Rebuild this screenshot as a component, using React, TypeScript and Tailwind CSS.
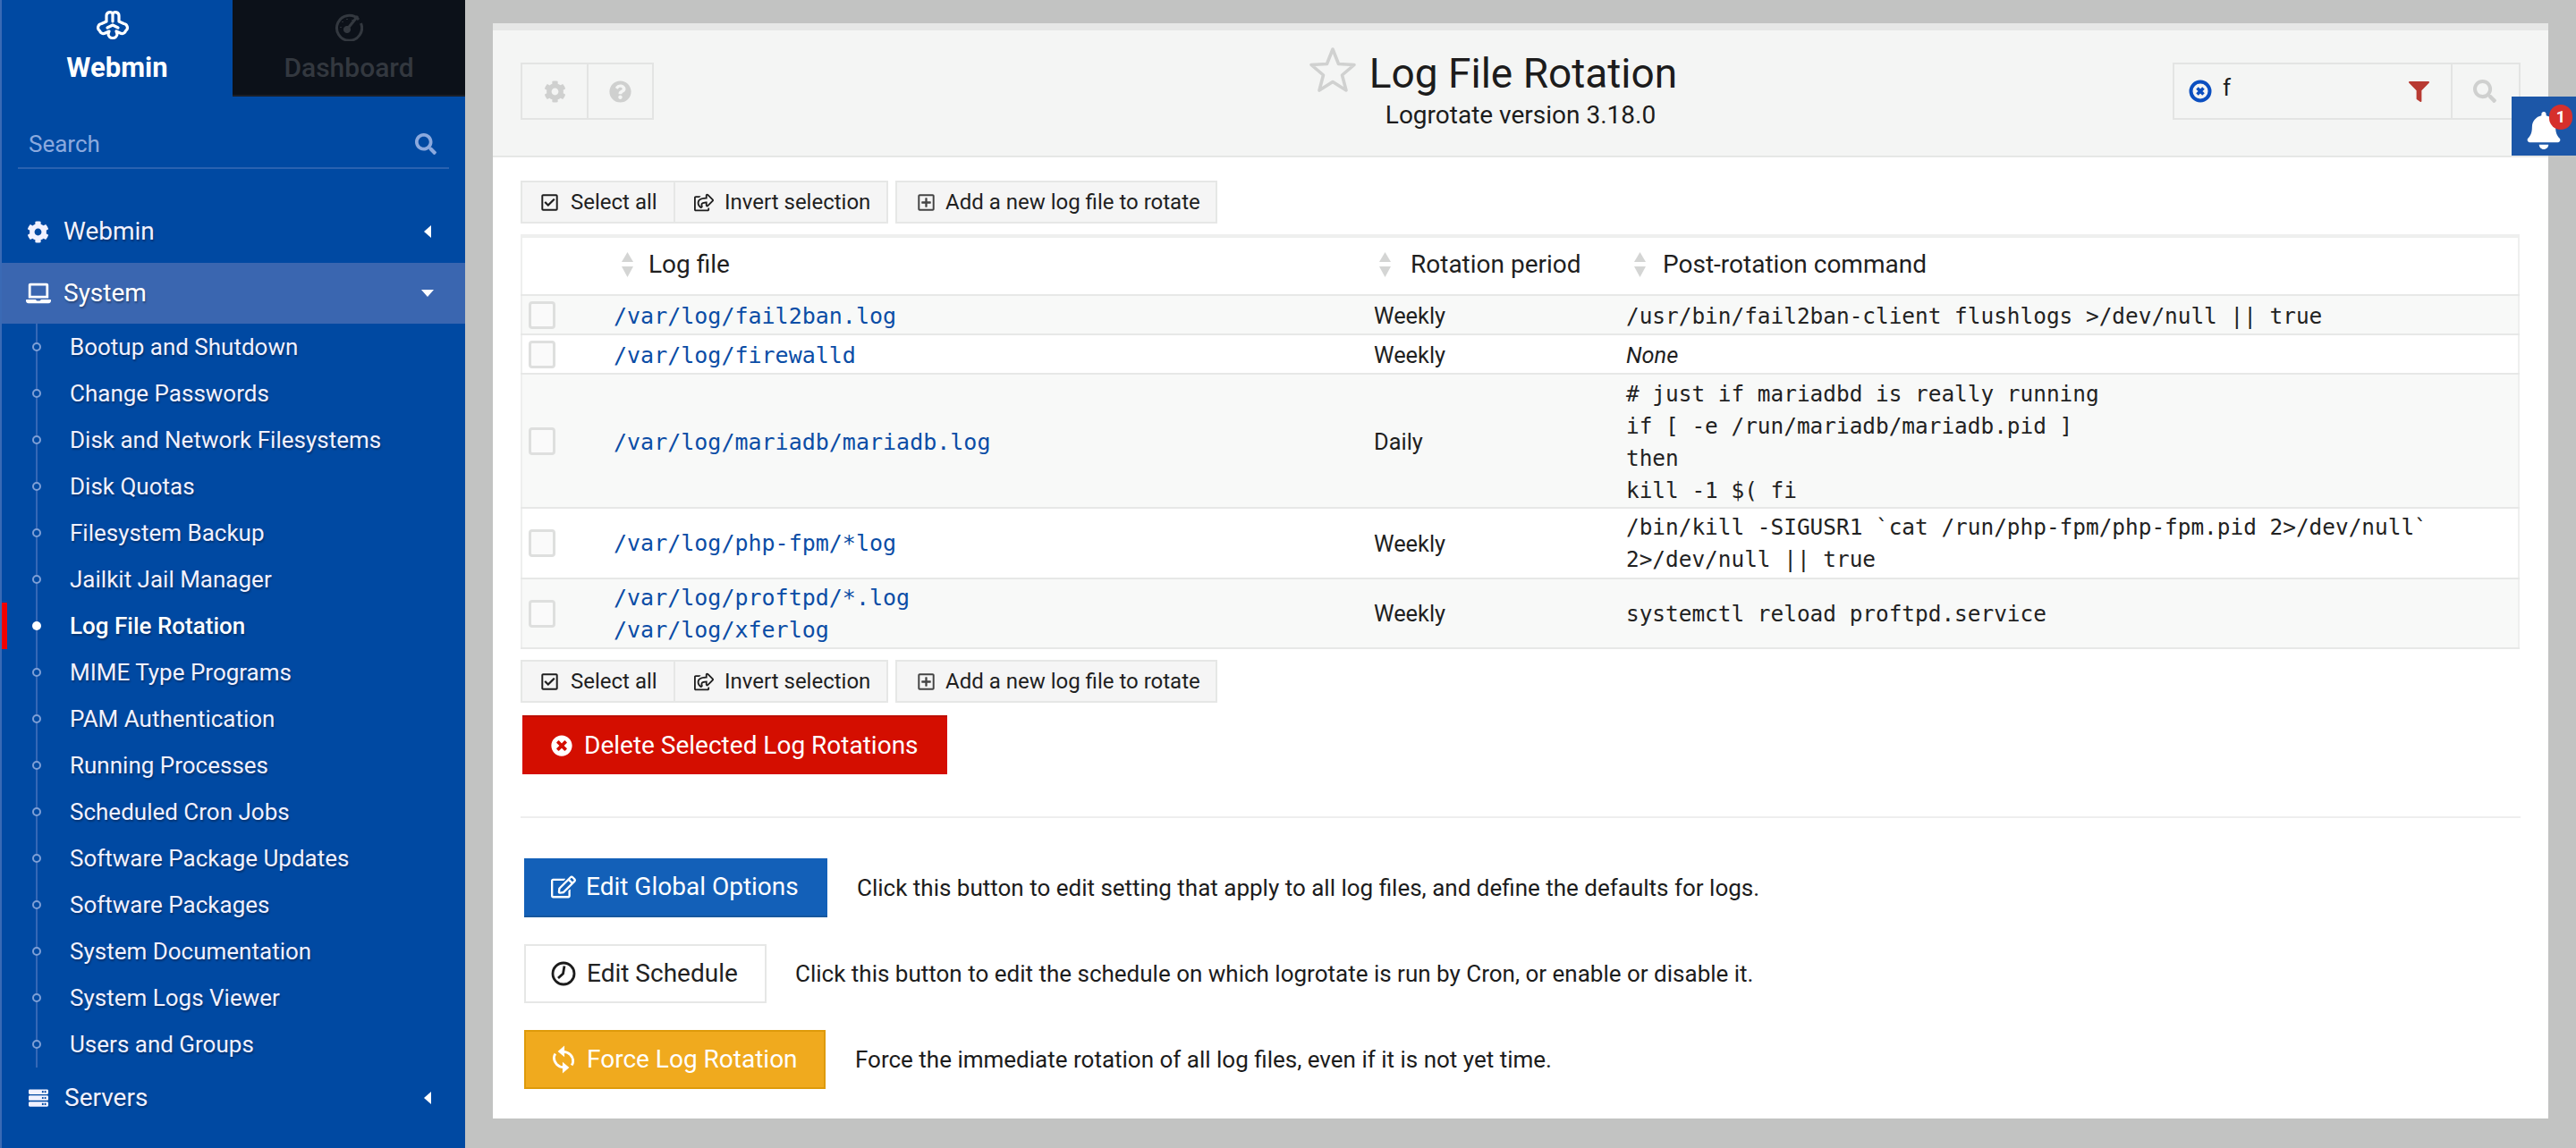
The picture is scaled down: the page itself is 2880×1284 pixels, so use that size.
import React from "react";
import {
  FaCog, FaLaptop, FaServer, FaSearch, FaQuestionCircle, FaRegCheckSquare, FaRegShareSquare,
  FaRegPlusSquare, FaTimesCircle, FaRegEdit, FaBell, FaFilter, FaTools,
} from "react-icons/fa";

const items = [
  "Bootup and Shutdown", "Change Passwords", "Disk and Network Filesystems", "Disk Quotas",
  "Filesystem Backup", "Jailkit Jail Manager", "Log File Rotation", "MIME Type Programs",
  "PAM Authentication", "Running Processes", "Scheduled Cron Jobs", "Software Package Updates",
  "Software Packages", "System Documentation", "System Logs Viewer", "Users and Groups",
];

const shadow = "[text-shadow:1px_2px_2px_rgba(0,0,0,0.3)]";

function Logo() {
  return (
    <svg width="36" height="34" viewBox="0 0 36 34" fill="none" stroke="white" strokeWidth="3.2" strokeLinejoin="round" strokeLinecap="round">
      <path d="M11 13V6.5A4 4 0 0 1 18 4A4 4 0 0 1 25 6.5V13L30.5 15.5A4.4 4.4 0 0 1 32.5 23.5A4.4 4.4 0 0 1 27.5 26.5L22 24L23 27A4.6 4.6 0 0 1 18 31.5A4.6 4.6 0 0 1 13 27L14 24L8.5 26.5A4.4 4.4 0 0 1 3.5 23.5A4.4 4.4 0 0 1 5.5 15.5Z" />
      <path d="M18 5V13M12 20L18 17L24 20" />
    </svg>
  );
}

function Gauge() {
  return (
    <svg width="32" height="32" viewBox="0 0 32 32" fill="none" stroke="#33383f">
      <path d="M27 8A14 14 0 1 0 29.5 12" strokeWidth="3" />
      <path d="M13 20L26 4" strokeWidth="3" />
      <circle cx="14" cy="19" r="3.6" fill="#33383f" />
      <path d="M7 16v1M9 10v1M14 7v1M20 8v1" strokeWidth="1.5" />
    </svg>
  );
}

function ClockIcon() {
  return (
    <svg width="28" height="28" viewBox="0 0 28 28" fill="none" stroke="#1c1c1c" strokeWidth="2.8">
      <circle cx="14" cy="14" r="12" />
      <path d="M15 5.5L13.5 14L8 19" />
    </svg>
  );
}

function RefreshIcon() {
  return (
    <svg width="30" height="32" viewBox="0 0 28 30" fill="none" stroke="white" strokeWidth="2.6">
      <path d="M14 7A10 10 0 0 1 24 17Q24 19 22.5 21" />
      <path d="M15 0.5L8 6.5L15 12.5Z" fill="white" stroke="none" />
      <path d="M14 23A10 10 0 0 1 4 13Q4 11 5.5 9" />
      <path d="M13 17.5L20 23.5L13 29.5Z" fill="white" stroke="none" />
    </svg>
  );
}

function Sort() {
  return (
    <svg width="15" height="28" viewBox="0 0 15 28" fill="#d4d5d4">
      <path d="M7.5 0L14 11H1Z" />
      <path d="M1 16H14L7.5 28Z" />
    </svg>
  );
}

function Toolbar() {
  const base = "flex items-center h-full text-[24px] text-[#1f1f1f]";
  return (
    <div className="flex gap-[8px] h-[48px]">
      <div className="flex h-full border-2 border-[#e6e7e6] bg-[#f5f5f5] w-[411px]">
        <div className={`${base} gap-[14px] w-[171px] border-r-2 border-[#e6e7e6] pl-[21px]`}>
          <FaRegCheckSquare className="w-[19px] h-[21px] shrink-0" />
          <span>Select all</span>
        </div>
        <div className={`${base} gap-[12px] flex-1 pl-[21px]`}>
          <FaRegShareSquare className="w-[22px] h-[21px] shrink-0" />
          <span>Invert selection</span>
        </div>
      </div>
      <div className={`${base} border-2 border-[#e6e7e6] bg-[#f5f5f5] w-[360px] pl-[23px] gap-[12px]`}>
        <FaRegPlusSquare className="w-[19px] h-[21px] shrink-0 text-[#444]" />
        <span>Add a new log file to rotate</span>
      </div>
    </div>
  );
}

function Check() {
  return <span className="block ml-[7px] w-[30px] h-[31px] rounded-[4px] border-[3px] border-[#dedfde] bg-[#fafafa]" />;
}

const mono = "font-['DejaVu_Sans_Mono',monospace] text-[24.4px] leading-[36px] text-[#222]";
const link = "font-['DejaVu_Sans_Mono',monospace] text-[25px] leading-[36px] text-[#0b4da6]";

const rows: { h: string; bg: string; pad: string; log: string[]; period: string; cmd: string[]; italic?: boolean }[] = [
  { h: "h-[44px]", bg: "bg-[#f8f9f8]", pad: "pt-[3px]", log: ["/var/log/fail2ban.log"], period: "Weekly", cmd: ["/usr/bin/fail2ban-client flushlogs >/dev/null || true"] },
  { h: "h-[44px]", bg: "bg-white", pad: "pt-[3px]", log: ["/var/log/firewalld"], period: "Weekly", cmd: ["None"], italic: true },
  { h: "h-[150px]", bg: "bg-[#f8f9f8]", pad: "pt-[3px]", log: ["/var/log/mariadb/mariadb.log"], period: "Daily", cmd: ["# just if mariadbd is really running", "if [ -e /run/mariadb/mariadb.pid ]", "then", "kill -1 $( fi"] },
  { h: "h-[79px]", bg: "bg-white", pad: "pt-[1px]", log: ["/var/log/php-fpm/*log"], period: "Weekly", cmd: ["/bin/kill -SIGUSR1 `cat /run/php-fpm/php-fpm.pid 2>/dev/null`", "2>/dev/null || true"] },
  { h: "h-[78px]", bg: "bg-[#f8f9f8]", pad: "pt-[1px]", log: ["/var/log/proftpd/*.log", "/var/log/xferlog"], period: "Weekly", cmd: ["systemctl reload proftpd.service"] },
];

function Sidebar() {
  const row = "flex items-center h-[68px] text-[28px] text-[#f1f1ff] " + shadow;
  return (
    <aside className="w-[520px] shrink-0 h-full bg-[#0049a2] border-l-2 border-[#3a6ab5] overflow-hidden">
      <div className="flex h-[108px]">
        <div className="w-[258px] flex flex-col items-center pt-[11px]">
          <div className="-ml-[10px]"><Logo /></div>
          <div className="text-[31px] leading-[36px] font-bold text-white mt-[13px]">Webmin</div>
        </div>
        <div className="w-[260px] bg-[#0c1119] border-b-2 border-[#1b1f27] flex flex-col items-center pt-[14px]">
          <Gauge />
          <div className="text-[30px] leading-[36px] font-medium text-[#33383f] mt-[12px]">Dashboard</div>
        </div>
      </div>
      <div className="mx-[18px] mt-[33px] h-[48px] border-b-2 border-[#2a62b0] flex items-center justify-between pl-[12px] pr-[14px] pb-[6px] text-[26px] text-[#8ba9de]">
        <span>Search</span>
        <FaSearch className="w-[24px] h-[24px]" />
      </div>
      <div className={`${row} mt-[36px]`}>
        <FaCog className="ml-[28px] w-[25px] h-[25px]" />
        <span className="ml-[16px] flex-1">Webmin</span>
        <span className="mr-[38px] w-0 h-0 border-y-[7px] border-y-transparent border-r-[8px] border-r-white" />
      </div>
      <div className={`${row} bg-[#3a66b0] text-white mt-px`}>
        <FaLaptop className="ml-[27px] w-[28px] h-[28px]" />
        <span className="ml-[14px] flex-1">System</span>
        <span className="mr-[35px] w-0 h-0 border-x-[7px] border-x-transparent border-t-[8px] border-t-white" />
      </div>
      <div className="relative">
        <div className="absolute left-[38px] top-0 bottom-0 w-[2px] bg-[#3568b6]" />
        {items.map((t) => {
          const active = t === "Log File Rotation";
          return (
            <div key={t} className={`relative flex items-center h-[52px] text-[26px] ${shadow} ${active ? "font-medium text-white" : "text-[#f1f1ff]"}`}>
              {active && <span className="absolute -left-[2px] top-0 w-[8px] h-[52px] bg-[#f00000]" />}
              <span className={`ml-[34px] w-[10px] h-[10px] rounded-full relative ${active ? "bg-white" : "bg-[#0049a2] border-2 border-[#7e9fd6]"}`} />
              <span className="ml-[32px]">{t}</span>
            </div>
          );
        })}
      </div>
      <div className={row}>
        <FaServer className="ml-[30px] w-[22px] h-[24px]" />
        <span className="ml-[18px] flex-1">Servers</span>
        <span className="mr-[38px] w-0 h-0 border-y-[7px] border-y-transparent border-r-[8px] border-r-white" />
      </div>
      <div className={row}>
        <FaTools className="ml-[30px] w-[24px] h-[24px]" />
        <span className="ml-[16px]">Tools</span>
      </div>
    </aside>
  );
}

function Panel() {
  return (
    <div className="ml-[31px] w-[2298px] h-[1225px] bg-white border-t-[8px] border-[#e6e7e6]">
      <div className="h-[142px] bg-[#f4f5f4] border-b-2 border-[#e6e7e6] px-[31px] grid grid-cols-[1fr_auto_1fr] pt-[24px]">
        <div className="mt-[12px] flex h-[64px] w-[149px] border-2 border-[#e3e4e3] text-[#cfd0cf]">
          <div className="w-[74px] border-r-2 border-[#e3e4e3] flex items-center justify-center"><FaCog className="w-[25px] h-[25px]" /></div>
          <div className="flex-1 flex items-center justify-center"><FaQuestionCircle className="w-[25px] h-[25px]" /></div>
        </div>
        <div className="flex flex-col items-center text-[#1c1c1c]">
          <div className="relative text-[46px] leading-[48px] ml-[6px]">
            <svg className="absolute -left-[68px] -top-[6px]" width="54" height="52" viewBox="0 0 54 52" fill="none" stroke="#d0d1d0" strokeWidth="3.6" strokeLinejoin="round">
              <path d="M27 3L33.5 19.5L51 20.5L37.5 32L42 49L27 39.5L12 49L16.5 32L3 20.5L20.5 19.5Z" />
            </svg>
            Log File Rotation
          </div>
          <div className="text-[28px] leading-[32px] mt-[7px]">Logrotate version 3.18.0</div>
        </div>
        <div className="mt-[12px] justify-self-end flex h-[64px] w-[389px] border-2 border-[#e3e4e3]">
          <div className="w-[311px] border-r-2 border-[#e3e4e3] flex items-center pl-[16px] pr-[24px]">
            <svg width="26" height="28" viewBox="0 0 26 28" fill="none">
              <circle cx="13" cy="14" r="10.5" stroke="#0b4fc0" strokeWidth="4" />
              <path d="M9.5 10.5L16.5 17.5M16.5 10.5L9.5 17.5" stroke="#0b4fc0" strokeWidth="3.6" />
            </svg>
            <span className="ml-[12px] flex-1 text-[26px] leading-[30px] -mt-[8px] text-[#1c1c1c]">f</span>
            <FaFilter className="w-[23px] h-[25px] text-[#b83a32]" />
          </div>
          <div className="flex-1 flex items-center justify-center text-[#cfd0cf] pr-[2px]"><FaSearch className="w-[26px] h-[28px]" /></div>
        </div>
      </div>

      <div className="px-[31px] pt-[26px]">
        <Toolbar />
        <table className="mt-[12px] w-[2235px] table-fixed border-collapse border-x-2 border-t-4 border-[#eeefee] text-[25.4px] text-[#1f1f1f]">
          <colgroup>
            <col className="w-[103px]" />
            <col className="w-[850px]" />
            <col className="w-[282px]" />
            <col />
          </colgroup>
          <thead>
            <tr className="h-[66px] border-b-2 border-[#e7e8e7] text-[28px]">
              <th />
              <th className="font-normal text-left"><div className="flex items-center gap-[16px] pl-[8px] pb-[4px]"><Sort />Log file</div></th>
              <th className="font-normal text-left"><div className="flex items-center gap-[21px] pl-[5px] pb-[4px]"><Sort />Rotation period</div></th>
              <th className="font-normal text-left"><div className="flex items-center gap-[18px] pl-[8px] pb-[4px]"><Sort />Post-rotation command</div></th>
            </tr>
          </thead>
          <tbody>
            {rows.map((r) => (
              <tr key={r.log[0]} className={`${r.h} ${r.bg} border-b-2 border-[#e7e8e7]`}>
                <td><Check /></td>
                <td className={`${link} ${r.pad}`}>{r.log.map((l) => <div key={l}>{l}</div>)}</td>
                <td className={r.pad}>{r.period}</td>
                <td className={`${r.italic ? "italic" : mono} ${r.pad}`}>{r.cmd.map((l) => <div key={l}>{l}</div>)}</td>
              </tr>
            ))}
          </tbody>
        </table>
        <div className="mt-[12px]"><Toolbar /></div>
        <div className="mt-[14px] ml-[2px] h-[66px] w-[475px] bg-[#d40e00] border-t-2 border-[#bd0d00] flex items-center pl-[32px] text-white text-[28px]">
          <FaTimesCircle className="w-[24px] h-[24px]" />
          <span className="ml-[13px]">Delete Selected Log Rotations</span>
        </div>
        <div className="mt-[47px] h-[2px] bg-[#eeeeee]" />
        <div className="mt-[45px] ml-[4px] flex items-center h-[66px]">
          <div className="w-[339px] h-full bg-[#1360b8] border-b-2 border-[#17579e] flex items-center pl-[30px] text-white text-[28px]">
            <FaRegEdit className="w-[28px] h-[26px]" />
            <span className="ml-[11px]">Edit Global Options</span>
          </div>
          <span className="ml-[33px] text-[26px]">Click this button to edit setting that apply to all log files, and define the defaults for logs.</span>
        </div>
        <div className="mt-[30px] ml-[4px] flex items-center h-[66px]">
          <div className="w-[271px] h-full bg-white border-2 border-[#e6e7e6] flex items-center pl-[28px] text-[#222] text-[28px]">
            <ClockIcon />
            <span className="ml-[12px]">Edit Schedule</span>
          </div>
          <span className="ml-[32px] text-[26px]">Click this button to edit the schedule on which logrotate is run by Cron, or enable or disable it.</span>
        </div>
        <div className="mt-[30px] ml-[4px] flex items-center h-[66px]">
          <div className="w-[337px] h-full bg-[#f0aa1e] border-2 border-[#de9a0a] flex items-center pl-[27px] text-white text-[28px]">
            <RefreshIcon />
            <span className="ml-[11px]">Force Log Rotation</span>
          </div>
          <span className="ml-[33px] text-[26px]">Force the immediate rotation of all log files, even if it is not yet time.</span>
        </div>
      </div>
    </div>
  );
}

export default function App() {
  return (
    <div className="relative flex w-[2880px] h-[1284px] overflow-hidden bg-[#c2c3c2] font-['Roboto',sans-serif] text-[#1c1c1c]">
      <Sidebar />
      <main className="flex-1 pt-[26px]">
        <Panel />
      </main>
      <div className="absolute left-[2808px] top-[108px] w-[72px] h-[66px] bg-[#1c57a8] text-white flex items-center justify-center">
        <FaBell className="w-[38px] h-[42px] mt-[10px]" />
        <span className="absolute left-[42px] top-[9px] w-[26px] h-[28px] rounded-full bg-[#d6302c] text-[18px] leading-[28px] font-bold text-center">1</span>
      </div>
    </div>
  );
}
